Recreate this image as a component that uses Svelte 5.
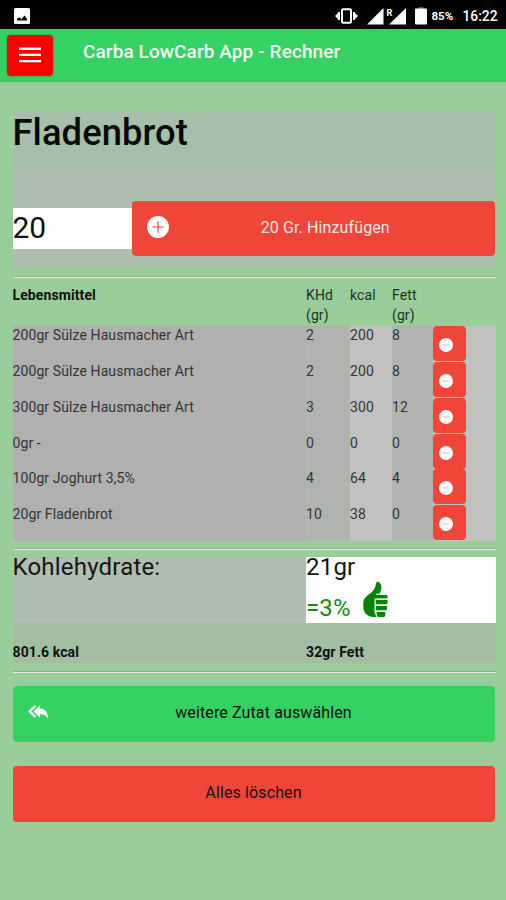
<script>
  let amount = $state("20");

  let items = $state([
    { id: 1, name: "200gr Sülze Hausmacher Art", carbs: 2, kcal: 200, fat: 8 },
    { id: 2, name: "200gr Sülze Hausmacher Art", carbs: 2, kcal: 200, fat: 8 },
    { id: 3, name: "300gr Sülze Hausmacher Art", carbs: 3, kcal: 300, fat: 12 },
    { id: 4, name: "0gr -", carbs: 0, kcal: 0, fat: 0 },
    { id: 5, name: "100gr Joghurt 3,5%", carbs: 4, kcal: 64, fat: 4 },
    { id: 6, name: "20gr Fladenbrot", carbs: 10, kcal: 38, fat: 0 },
  ]);

  function remove(id) {
    items = items.filter((item) => item.id !== id);
  }
</script>

<div class="screen">
  <div class="status">
    <svg class="photo" width="16" height="16" viewBox="0 0 16 16">
      <rect width="16" height="16" rx="1.5" fill="#fff" />
      <path d="M3 12.5V10.5L5.5 9.5L7.5 11L10.5 7.5L13 11V12.5Z" fill="#000" />
    </svg>
    <svg class="vibrate" width="23" height="16" viewBox="0 0 23 16">
      <rect x="7" y="1.200" width="9" height="13.600" rx="1" fill="none" stroke="#fff" stroke-width="2" />
      <path d="M4 4V12M19 4V12" stroke="#fff" stroke-width="2" />
      <path d="M3 5V11L0 8ZM20 5V11L23 8Z" fill="#fff" />
    </svg>
    <svg class="signal" width="40" height="20" viewBox="0 0 40 20">
      <path d="M0 18.500L16.500 2V18.500ZM22 18.500L39 2V18.500Z" fill="#fff" />
      <text x="19.500" y="9.500" font-size="9" font-weight="700" fill="#fff">R</text>
    </svg>
    <svg class="battery" width="12" height="18" viewBox="0 0 12 18">
      <path d="M3.500 0H8.500V2H3.500Z" fill="#555" />
      <rect y="1.500" width="12" height="16" rx="1" fill="#fff" />
    </svg>
    <span class="percent">85%</span>
    <span class="clock">16:22</span>
  </div>

  <header>
    <button class="menu" aria-label="Menü">
      <svg width="22" height="16" viewBox="0 0 22 16">
        <path d="M0 1.700H22M0 7.900H22M0 14.100H22" stroke="#fff" stroke-width="2.400" />
      </svg>
    </button>
    <h1>Carba LowCarb App - Rechner</h1>
  </header>

  <main>
    <h2>Fladenbrot</h2>

    <div class="entry">
      <input type="text" bind:value={amount} aria-label="Menge" />
      <button class="big red add">
        <svg width="22" height="22" viewBox="0 0 22 22">
          <circle cx="11" cy="11" r="11" fill="#fff" />
          <path d="M11 5.200V16.800M5.200 11H16.800" stroke="#f04639" stroke-width="1.200" />
        </svg>
        <span>{amount} Gr. Hinzufügen</span>
      </button>
    </div>

    <hr />

    <div class="row head">
      <b>Lebensmittel</b>
      <span>KHd (gr)</span>
      <span>kcal</span>
      <span>Fett (gr)</span>
      <span></span>
    </div>
    {#each items as item (item.id)}
      <div class="row item">
        <span>{item.name}</span>
        <span>{item.carbs}</span>
        <span>{item.kcal}</span>
        <span>{item.fat}</span>
        <span>
          <button class="remove" aria-label="Löschen" onclick={() => remove(item.id)}>
            <svg width="14" height="14" viewBox="0 0 14 14">
              <circle cx="7" cy="7" r="7" fill="#fff" />
              <path d="M3.500 7H10.500" stroke="#f9aaa2" stroke-width="1" />
            </svg>
          </button>
        </span>
      </div>
    {/each}

    <hr />

    <div class="result">
      <div class="label">Kohlehydrate:</div>
      <div class="value">
        <div>21gr</div>
        <div class="share">
          =3%
          <svg width="25" height="37" viewBox="0 0 25 37">
            <path
              d="M13.500 1C15 0 18.500 2.500 18.500 6C18.500 9 17 11 16.500 13.500H23Q24.500 13.500 24.500 15V17.500H13.500V20H12V31.500L14.500 36H10C4 35.500 0.500 31.500 0.300 26C0 18 1 17 7 12.500C12 9 12.500 5 13.500 1Z"
              fill="#078407"
            />
            <path
              d="M14.500 13.800H22.500Q24 13.800 24 15.500T22.500 17.500H12.500V15.500ZM12.500 18.700H23.200Q24.700 18.700 24.700 21T23.200 23.500H12.500ZM13 24.700H22.800Q24.200 24.700 24.200 27T22.800 29.500H13ZM13.500 30.700H21.200Q22.500 30.700 22.500 33.200T21 36H15Q13.500 35.500 13.500 33Z"
              fill="#078407"
            />
            <path d="M12.500 18.100H25M12.500 24.100H25M12.500 30.100H24M13 13.300H24M12 17.500V31L14 36" stroke="#fff" stroke-width="1" fill="none" />
          </svg>
        </div>
      </div>
    </div>
    <div class="totals">
      <b>801.6 kcal</b>
      <b>32gr Fett</b>
    </div>

    <hr />

    <button class="big green">
      <svg width="20" height="15" viewBox="0 0 20 15">
        <path d="M12 0V3.500C17 3.800 20 7 20 13.500C18 10.500 15.500 9.200 12 9.200V12.700L5.500 6.400Z" fill="#fff" />
        <path d="M7.500 0.800L1.700 6.400L7.500 12" fill="none" stroke="#fff" stroke-width="2.400" />
      </svg>
      <span>weitere Zutat auswählen</span>
    </button>
    <button class="big red clear"><span>Alles löschen</span></button>
  </main>
</div>

<style>
  :global(body) {
    margin: 0;
    background: #99cd99;
  }

  .screen {
    min-height: 900px;
    background: #99cd99;
    font-family: Roboto, sans-serif;
    font-size: 14px;
    letter-spacing: 0.1px;
    color: #222;
    overflow: hidden;
  }

  button {
    border: none;
    padding: 0;
    font-family: inherit;
  }

  .status {
    display: flex;
    align-items: center;
    height: 29px;
    box-sizing: border-box;
    padding: 2px 8.500px 0 14px;
    background: #000;
    color: #fff;
    font-weight: 500;
    letter-spacing: 0;
  }
  .vibrate {
    margin-left: auto;
  }
  .signal {
    margin-left: 9px;
  }
  .battery {
    margin-left: 8px;
  }
  .percent {
    width: 31px;
    margin-left: 4px;
    font-size: 11.500px;
    font-weight: 700;
  }
  .clock {
    font-size: 13.800px;
  }

  header {
    display: flex;
    align-items: flex-start;
    height: 53px;
    box-sizing: border-box;
    padding: 6px 7px;
    background: #36d163;
  }
  .menu {
    display: flex;
    align-items: center;
    justify-content: center;
    width: 46px;
    height: 41px;
    padding-bottom: 2px;
    border-radius: 4px;
    background: #fe0000;
    box-shadow: 0 0 2px rgba(90, 60, 0, 0.6);
  }
  h1 {
    margin: 5px 0 0 30px;
    font-size: 19px;
    line-height: 23px;
    font-weight: 500;
    color: #f2fff2;
  }

  main {
    padding: 30px 10.5px 0 12.500px;
  }
  h2 {
    height: 56px;
    margin: 0;
    background: #a6bfa8;
    color: #050a05;
    font-size: 36.300px;
    line-height: 42px;
    font-weight: 500;
  }
  .entry {
    display: flex;
    align-items: flex-start;
    height: 100px;
    box-sizing: border-box;
    padding: 33px 1px 0 0;
    background: #afbfaf;
  }
  input {
    width: 119.500px;
    height: 41px;
    box-sizing: border-box;
    margin-top: 7px;
    padding: 0 0 2px;
    border: none;
    border-radius: 0;
    outline: none;
    background: #fff;
    color: #111;
    font: 30px Roboto, sans-serif;
  }

  .big {
    display: flex;
    align-items: center;
    width: calc(100% - 1px);
    height: 56px;
    box-sizing: border-box;
    padding: 0 15px 3px;
    border-radius: 4px;
    font-size: 16px;
    letter-spacing: 0.120px;
    color: #111;
  }
  .big span {
    flex: 1;
    text-align: center;
  }
  .red {
    background: #f04639;
  }
  .green {
    background: #36d163;
  }
  .add {
    width: auto;
    height: 55px;
    flex: 1;
    color: #ffe9e6;
  }
  .add span {
    padding-left: 2px;
  }
  .clear {
    margin-top: 24px;
  }

  hr {
    height: 1px;
    margin: 8px 0 7px;
    border: none;
    border-top: 1px solid #95a795;
    background: #e2eee2;
  }

  .row {
    display: grid;
    grid-template-columns: 293.500px 44px 42px 41px 1fr;
    line-height: 20px;
  }
  .head {
    height: 41px;
    color: #1d331d;
  }
  .head span {
    padding-right: 8px;
  }
  b {
    color: #0a140a;
    font-weight: 700;
  }
  .item {
    height: 35.850px;
    line-height: 18px;
    color: #333;
  }
  .item > span {
    background: #b1b3b1;
  }
  .item > :nth-child(1) {
    background: #b0b0b0;
  }
  .item > :nth-child(3),
  .item > :nth-child(5) {
    background: #c0c1c0;
  }
  .item + hr {
    margin-top: 7px;
  }
  .remove {
    display: flex;
    align-items: center;
    width: 33px;
    height: 35px;
    padding: 3px 0 0 6px;
    border-radius: 4px;
    background: #f04639;
  }

  .result {
    display: grid;
    grid-template-columns: 293.500px 1fr;
    height: 66px;
    font-size: 24px;
    letter-spacing: 0.200px;
    line-height: 20px;
    color: #151515;
  }
  .label {
    background: #afbfaf;
  }
  .value {
    background: #fff;
  }
  .share {
    display: flex;
    align-items: flex-end;
    gap: 12px;
    height: 41px;
    color: #109010;
  }
  .totals {
    display: grid;
    grid-template-columns: 293.500px 1fr;
    height: 40px;
    box-sizing: border-box;
    padding-top: 19px;
    background: #a2bfa4;
    line-height: 20px;
  }
  .totals + hr {
    margin-bottom: 12.500px;
  }
</style>
